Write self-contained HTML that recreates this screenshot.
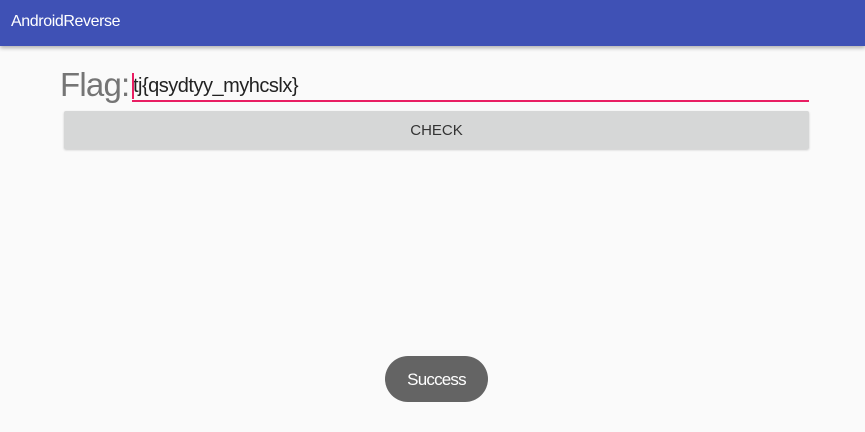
<!DOCTYPE html>
<html><head><style>
body{margin:0;width:865px;height:432px;background:#fafafa;font-family:"Liberation Sans",sans-serif;position:relative;overflow:hidden}
.bar{position:absolute;left:0;top:0;width:865px;height:46px;background:#3f51b5;box-shadow:0 2px 4px rgba(0,0,0,.3)}
.bar span{position:absolute;left:11px;top:13px;color:#fff;font-size:16px;letter-spacing:-0.4px}
.flag{position:absolute;left:60px;top:66px;font-size:33px;color:#757575;letter-spacing:-0.8px}
.inp{position:absolute;left:133px;top:75px;font-size:20px;color:#222;letter-spacing:-0.5px}
.line{position:absolute;left:132px;top:100px;width:677px;height:2px;background:#e91e63}
.cur{position:absolute;left:132px;top:73px;width:2px;height:26px;background:#e91e63}
.btn{position:absolute;left:64px;top:111px;width:745px;height:38px;background:#d6d7d7;border-radius:2px;box-shadow:0 1px 2px rgba(0,0,0,.2);text-align:center;line-height:39px;font-size:15px;color:#333}
.toast{position:absolute;left:385px;top:356px;width:103px;height:46px;background:#646464;border-radius:23px;color:#fff;text-align:center;line-height:47px;font-size:17px;letter-spacing:-0.8px}
</style></head><body>
<div class="bar"><span>AndroidReverse</span></div>
<div class="flag">Flag:</div>
<div class="inp">tj{qsydtyy_myhcslx}</div>
<div class="cur"></div>
<div class="line"></div>
<div class="btn">CHECK</div>
<div class="toast">Success</div>
</body></html>
